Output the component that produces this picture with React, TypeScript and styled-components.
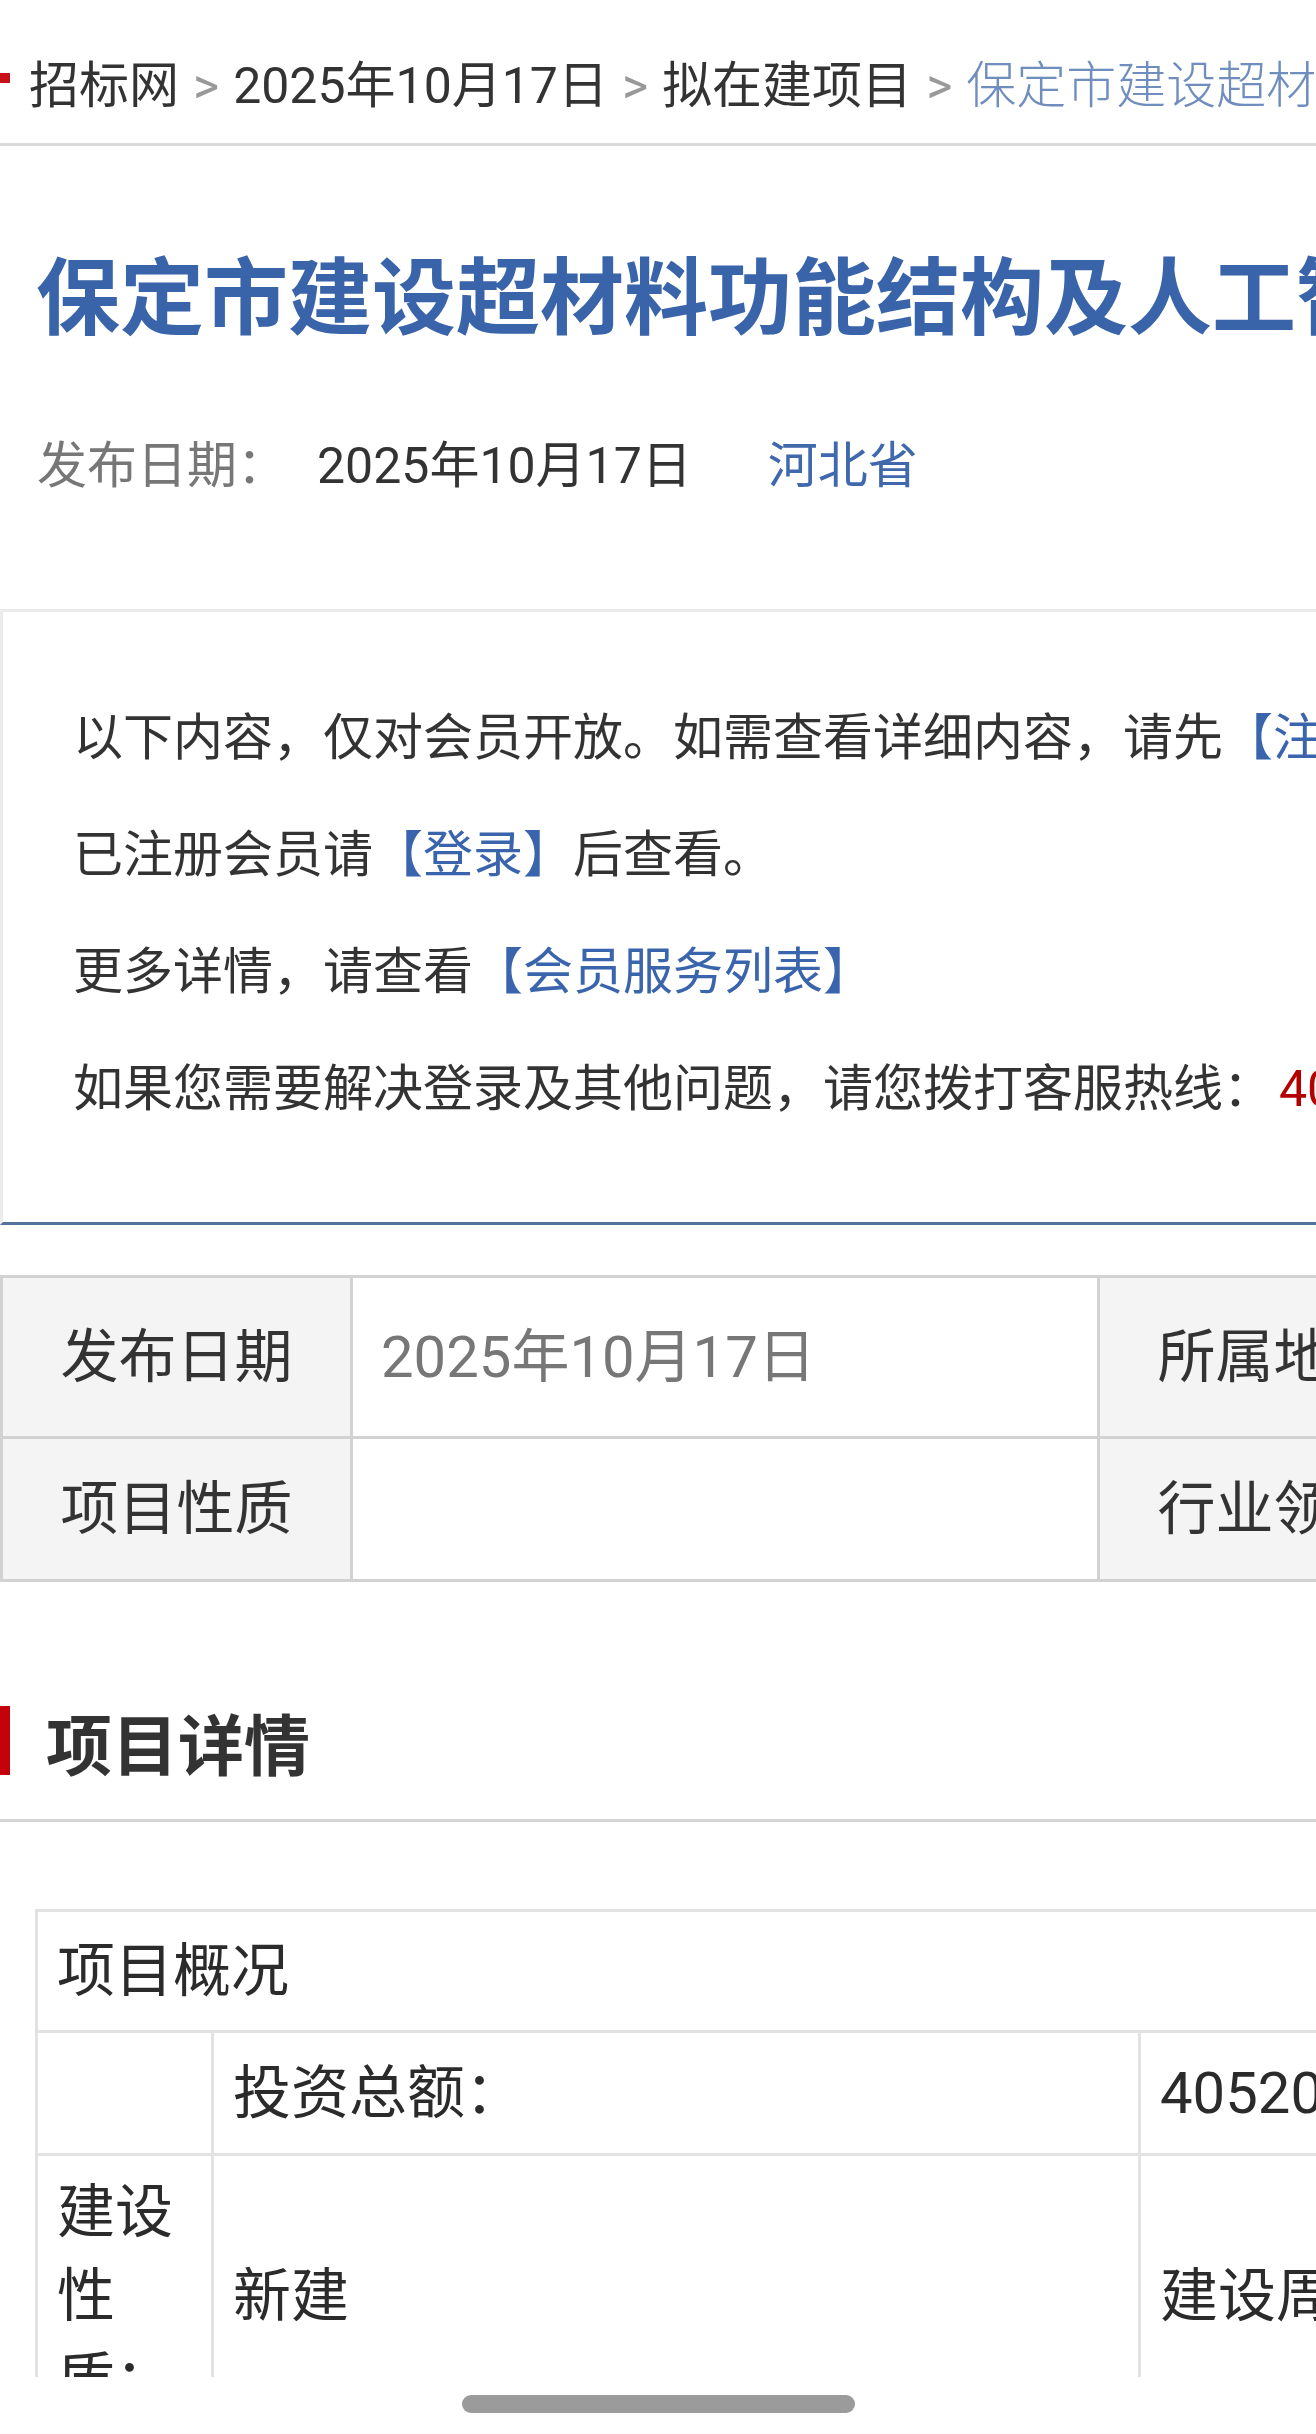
import React from "react";
import styled, { createGlobalStyle } from "styled-components";

const GlobalStyle = createGlobalStyle`
  html, body {
    margin: 0;
    padding: 0;
    background: #ffffff;
  }
  body {
    width: 1316px;
    height: 2434px;
    overflow: hidden;
    font-family: Roboto, "Noto Sans CJK SC", "Noto Sans", sans-serif;
    color: #333333;
  }
  #root {
    width: 1316px;
  }
`;

const Screen = styled.div`
  width: 1316px;
  height: 2434px;
  display: flex;
  flex-direction: column;
  background: #ffffff;
  overflow: hidden;
`;

const Viewport = styled.main`
  flex: none;
  height: 2377px;
  overflow: hidden;
`;

const HomeArea = styled.div`
  flex: 1;
  display: flex;
  justify-content: center;
  padding-top: 18px;
`;

const HomeIndicator = styled.div`
  width: 393px;
  height: 18px;
  border-radius: 9px;
  background: #9b9b9b;
`;

/* ---------- breadcrumb ---------- */

const Breadcrumb = styled.nav`
  box-sizing: border-box;
  display: flex;
  align-items: center;
  height: 146px;
  padding-top: 28px;
  border-bottom: 3px solid #dadada;
  white-space: nowrap;
  font-size: 50px;
  line-height: 60px;
`;

const Marker = styled.span`
  flex: none;
  width: 10px;
  height: 10px;
  margin: 0 19px 15px 0;
  background: #c8101a;
`;

const Crumb = styled.span<{ $current?: boolean }>`
  flex: none;
  color: ${(p) => (p.$current ? "#6f8dbd" : "#333333")};
  font-weight: ${(p) => (p.$current ? 300 : 400)};
`;

const Sep = styled.span`
  flex: none;
  margin: 0 14px;
  font-size: 50px;
  color: #999999;
`;

/* ---------- title & meta ---------- */

const Title = styled.h1`
  margin: 0;
  padding: 104px 0 0 36px;
  font-size: 84px;
  font-weight: 700;
  line-height: 100px;
  color: #3a64aa;
  white-space: nowrap;
`;

const Meta = styled.div`
  display: flex;
  margin-top: 86px;
  padding-left: 37px;
  font-size: 50px;
  line-height: 60px;
  white-space: nowrap;
`;

const MetaLabel = styled.span`
  color: #777777;
  margin-right: 30px;
`;

const MetaDate = styled.span`
  color: #333333;
`;

const MetaRegion = styled.span`
  color: #3f68ad;
  margin-left: 76px;
`;

/* ---------- member notice ---------- */

const Notice = styled.section`
  width: 2200px;
  margin-top: 113px;
  padding: 68px 0 74px 70px;
  border-top: 3px solid #ebebeb;
  border-left: 3px solid #ebebeb;
  border-bottom: 3px solid #52719b;
  font-size: 50px;
`;

const NoticeLine = styled.p`
  margin: 0;
  line-height: 117px;
  white-space: nowrap;
  color: #333333;
`;

const Link = styled.a`
  color: #3a65ad;
  text-decoration: none;
`;

const Hotline = styled.span`
  color: #b50000;
  margin-left: 6px;
`;

/* ---------- info table ---------- */

const InfoGrid = styled.div`
  display: grid;
  width: max-content;
  margin-top: 50px;
  grid-template-columns: 350px 747px 350px 747px;
  grid-template-rows: 161px 143px;
  border-top: 3px solid #d2d2d2;
  border-left: 3px solid #d2d2d2;
`;

const InfoCell = styled.div<{ $label?: boolean; $muted?: boolean }>`
  box-sizing: border-box;
  display: flex;
  align-items: center;
  justify-content: ${(p) => (p.$label ? "center" : "flex-start")};
  padding: ${(p) => (p.$label ? "0 0 10px" : "0 28px 10px")};
  border-right: 3px solid #d2d2d2;
  border-bottom: 3px solid #d2d2d2;
  background: ${(p) => (p.$label ? "#f4f4f4" : "#ffffff")};
  color: ${(p) => (p.$muted ? "#777777" : "#333333")};
  font-size: 58px;
  white-space: nowrap;
`;

/* ---------- section heading ---------- */

const SectionHead = styled.div`
  margin-top: 124px;
  padding-bottom: 44px;
  border-bottom: 3px solid #d4d4d4;
`;

const SectionTitle = styled.h2`
  display: flex;
  align-items: center;
  height: 69px;
  margin: 0;
  font-size: 66px;
  font-weight: 700;
  color: #333333;
  white-space: nowrap;

  &::before {
    content: "";
    flex: none;
    width: 10px;
    height: 69px;
    margin-right: 36px;
    background: #c4000c;
  }
`;

/* ---------- detail table ---------- */

const DetailGrid = styled.div`
  display: grid;
  width: max-content;
  margin: 87px 0 0 35px;
  grid-template-columns: 176px 927px 800px;
  grid-template-rows: 121px 123px auto;
  border-top: 3px solid #e2e2e2;
  border-left: 3px solid #e2e2e2;
`;

const DetailCell = styled.div<{ $span?: boolean; $wrap?: boolean }>`
  box-sizing: border-box;
  display: flex;
  align-items: center;
  grid-column: ${(p) => (p.$span ? "1 / -1" : "auto")};
  padding: 14px 19px;
  border-right: 3px solid #e2e2e2;
  border-bottom: 3px solid #e2e2e2;
  font-size: 58px;
  line-height: 84px;
  color: #2b2b2b;
  white-space: ${(p) => (p.$wrap ? "normal" : "nowrap")};
`;

const WrapText = styled.span`
  display: block;
  width: 100%;
`;

export default function App() {
  return (
    <>
      <GlobalStyle />
      <Screen>
        <Viewport>
          <Breadcrumb>
            <Marker />
            <Crumb>招标网</Crumb>
            <Sep>&gt;</Sep>
            <Crumb>2025年10月17日</Crumb>
            <Sep>&gt;</Sep>
            <Crumb>拟在建项目</Crumb>
            <Sep>&gt;</Sep>
            <Crumb $current>保定市建设超材料功能结构及人工智能项目</Crumb>
          </Breadcrumb>

          <Title>保定市建设超材料功能结构及人工智能项目</Title>

          <Meta>
            <MetaLabel>发布日期：</MetaLabel>
            <MetaDate>2025年10月17日</MetaDate>
            <MetaRegion>河北省</MetaRegion>
          </Meta>

          <Notice>
            <NoticeLine>
              以下内容，仅对会员开放。如需查看详细内容，请先<Link>【注册】</Link>成为会员。
            </NoticeLine>
            <NoticeLine>
              已注册会员请<Link>【登录】</Link>后查看。
            </NoticeLine>
            <NoticeLine>
              更多详情，请查看<Link>【会员服务列表】</Link>
            </NoticeLine>
            <NoticeLine>
              如果您需要解决登录及其他问题，请您拨打客服热线：<Hotline>400</Hotline>
            </NoticeLine>
          </Notice>

          <InfoGrid>
            <InfoCell $label>发布日期</InfoCell>
            <InfoCell $muted>2025年10月17日</InfoCell>
            <InfoCell $label>所属地区</InfoCell>
            <InfoCell $muted>河北省</InfoCell>
            <InfoCell $label>项目性质</InfoCell>
            <InfoCell />
            <InfoCell $label>行业领域</InfoCell>
            <InfoCell />
          </InfoGrid>

          <SectionHead>
            <SectionTitle>项目详情</SectionTitle>
          </SectionHead>

          <DetailGrid>
            <DetailCell $span>项目概况</DetailCell>
            <DetailCell />
            <DetailCell>投资总额：</DetailCell>
            <DetailCell>40520万元</DetailCell>
            <DetailCell $wrap>
              <WrapText>建设性质：</WrapText>
            </DetailCell>
            <DetailCell>新建</DetailCell>
            <DetailCell>建设周期：</DetailCell>
          </DetailGrid>
        </Viewport>
        <HomeArea>
          <HomeIndicator />
        </HomeArea>
      </Screen>
    </>
  );
}
